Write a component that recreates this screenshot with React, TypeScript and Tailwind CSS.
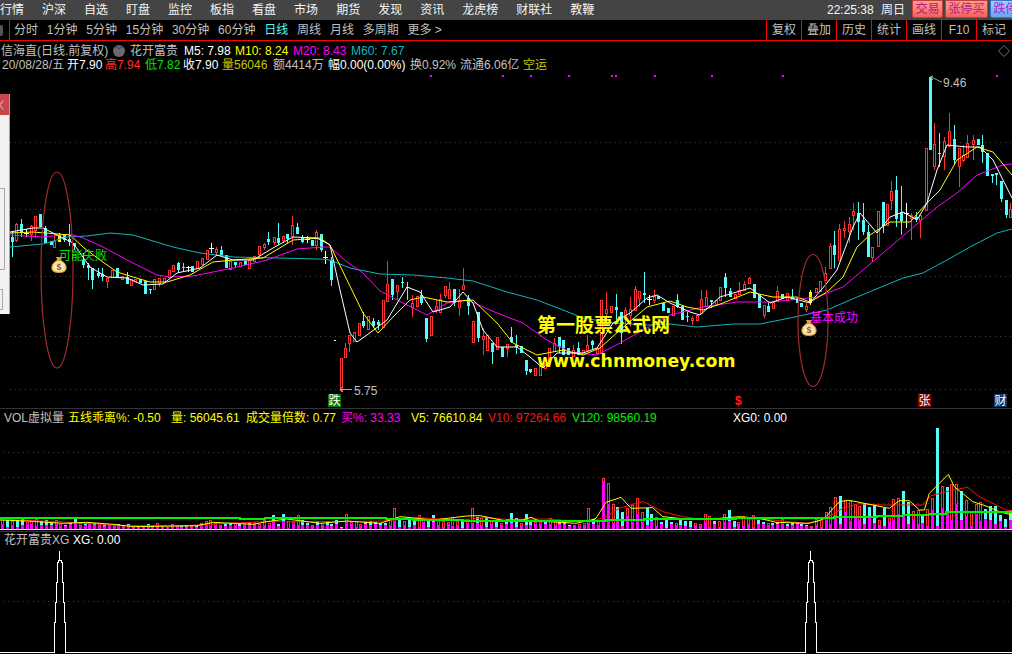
type Kind = "r" | "c" | "w" | "y";
type Row = [number, number, number, number, number, Kind];

const RED = "#ff3232";
const CYAN = "#54fcfc";

// candles read off the chart: x, body top, body bottom, high, low (0 = no wick), kind
const fromCrop = (ox: number, oy: number, rows: Row[]) =>
  rows.map(([x, t, b, h, l, k]) => ({
    x: Math.round(ox + x / 3),
    top: oy + t / 3,
    bottom: oy + b / 3,
    high: oy + (h || t) / 3,
    low: oy + (l || b) / 3,
    kind: k,
  }));

const candles = [
  ...fromCrop(0, 90, [
    [37, 440, 455, 425, 500, "c"], [49, 402, 452, 398, 455, "r"], [64, 402, 428, 388, 440, "c"], [78, 428, 430, 418, 440, "w"],
    [94, 410, 432, 405, 452, "r"], [106, 378, 420, 0, 445, "r"], [121, 372, 412, 0, 0, "c"], [136, 415, 458, 408, 0, "c"],
    [152, 452, 466, 0, 0, "c"], [163, 455, 472, 432, 0, "r"], [178, 436, 456, 428, 0, "y"], [193, 435, 450, 0, 455, "c"],
    [208, 448, 456, 402, 468, "c"], [222, 460, 468, 0, 480, "c"], [250, 510, 525, 490, 535, "c"], [265, 525, 535, 520, 570, "c"],
    [277, 535, 570, 0, 597, "c"], [293, 550, 558, 535, 565, "c"], [307, 552, 560, 535, 572, "c"], [322, 565, 573, 0, 594, "r"],
    [335, 540, 562, 0, 0, "r"], [350, 535, 560, 0, 0, "c"], [365, 558, 568, 0, 0, "r"], [380, 560, 582, 545, 0, "c"],
    [394, 568, 585, 0, 0, "r"], [406, 568, 575, 0, 0, "r"], [421, 568, 578, 0, 0, "c"], [436, 573, 612, 0, 0, "c"],
    [451, 596, 600, 0, 612, "c"], [463, 568, 598, 0, 0, "r"], [478, 565, 580, 0, 590, "r"], [492, 565, 578, 0, 0, "r"],
    [508, 540, 562, 0, 565, "r"], [520, 525, 545, 0, 0, "r"], [535, 520, 540, 517, 545, "c"], [550, 530, 534, 520, 545, "c"],
    [563, 532, 536, 528, 547, "w"], [577, 528, 546, 0, 0, "c"], [592, 515, 535, 0, 0, "r"], [607, 505, 522, 0, 0, "r"],
    [622, 482, 508, 0, 0, "r"], [634, 474, 476, 460, 490, "w"], [649, 478, 488, 470, 495, "r"], [664, 480, 495, 468, 0, "c"],
    [679, 495, 535, 0, 0, "c"], [691, 515, 538, 0, 0, "r"], [706, 515, 525, 0, 535, "c"], [721, 517, 530, 0, 0, "r"],
    [736, 512, 525, 0, 0, "c"], [748, 510, 535, 0, 0, "r"], [763, 500, 515, 0, 0, "r"], [778, 468, 492, 0, 503, "r"],
    [793, 463, 473, 458, 480, "r"], [805, 447, 457, 425, 465, "c"], [821, 442, 458, 0, 465, "r"], [835, 445, 460, 400, 465, "c"],
    [850, 438, 450, 0, 458, "r"], [862, 432, 448, 0, 460, "c"], [877, 405, 440, 378, 465, "r"], [892, 410, 432, 400, 0, "c"],
    [907, 445, 455, 435, 460, "c"], [920, 447, 449, 438, 458, "w"], [935, 450, 468, 0, 0, "c"], [949, 428, 465, 420, 480, "r"],
    [964, 433, 480, 0, 485, "c"], [976, 500, 502, 484, 522, "w"], [992, 510, 570, 500, 588, "c"],
  ]),
  ...fromCrop(330, 220, [
    [32, 415, 510, 413, 515, "r"], [44, 385, 413, 370, 0, "r"], [58, 345, 370, 0, 395, "r"], [73, 338, 365, 0, 0, "r"],
    [88, 310, 345, 0, 0, "r"], [100, 303, 318, 275, 325, "c"], [115, 290, 328, 0, 0, "r"], [130, 302, 318, 295, 325, "c"],
    [145, 305, 315, 300, 330, "c"], [160, 242, 322, 0, 0, "r"], [172, 193, 243, 123, 0, "r"], [187, 178, 225, 0, 240, "c"],
    [202, 195, 215, 0, 240, "r"], [216, 185, 190, 172, 205, "c"], [230, 200, 203, 186, 240, "c"], [245, 250, 262, 225, 290, "r"],
    [260, 230, 258, 0, 0, "r"], [274, 225, 250, 210, 255, "c"], [288, 295, 358, 0, 365, "c"], [302, 288, 347, 0, 0, "r"],
    [317, 258, 272, 240, 280, "r"], [331, 238, 278, 222, 0, "r"], [344, 200, 225, 0, 235, "r"], [358, 208, 235, 185, 0, "r"],
    [373, 207, 250, 0, 258, "c"], [388, 240, 262, 208, 288, "r"], [400, 195, 208, 143, 210, "r"], [415, 235, 258, 225, 285, "c"],
    [430, 303, 367, 0, 0, "r"], [445, 275, 355, 0, 365, "c"], [458, 350, 358, 325, 405, "r"], [472, 345, 390, 0, 0, "r"],
    [487, 370, 395, 0, 432, "c"], [502, 352, 387, 0, 0, "r"], [515, 380, 410, 0, 0, "c"], [530, 373, 385, 0, 412, "r"],
    [544, 350, 365, 322, 370, "c"], [558, 375, 382, 345, 402, "c"], [572, 378, 400, 0, 0, "c"], [587, 420, 452, 0, 465, "c"],
    [601, 447, 455, 0, 460, "c"], [616, 445, 467, 0, 0, "r"], [630, 435, 467, 412, 0, "r"], [645, 430, 445, 0, 0, "r"],
    [658, 385, 420, 0, 0, "r"], [673, 370, 395, 355, 0, "r"], [687, 350, 380, 0, 400, "c"], [700, 360, 405, 0, 0, "c"],
    [714, 385, 405, 0, 0, "c"], [730, 390, 410, 375, 0, "r"], [743, 385, 405, 365, 0, "c"], [758, 390, 400, 0, 0, "r"],
    [772, 375, 392, 345, 0, "r"], [787, 363, 375, 360, 390, "c"], [800, 385, 400, 0, 0, "r"], [814, 240, 400, 0, 0, "r"],
    [829, 268, 280, 215, 315, "r"], [844, 260, 278, 0, 0, "r"], [857, 262, 270, 222, 300, "c"], [872, 275, 340, 0, 372, "c"],
    [886, 270, 298, 260, 325, "r"], [900, 268, 285, 230, 320, "r"], [914, 207, 270, 198, 0, "r"], [928, 215, 235, 0, 262, "r"],
    [943, 220, 225, 156, 250, "c"], [958, 238, 240, 225, 255, "w"], [973, 228, 240, 210, 250, "r"], [985, 228, 238, 0, 0, "c"],
    [1000, 248, 272, 0, 0, "c"], [1015, 265, 280, 0, 0, "c"],
  ]),
  ...fromCrop(670, 70, [
    [10, 708, 735, 0, 0, "r"], [22, 690, 710, 672, 715, "c"], [37, 708, 750, 0, 0, "c"], [52, 738, 742, 725, 755, "c"],
    [67, 745, 750, 738, 765, "r"], [80, 735, 750, 0, 0, "r"], [94, 687, 730, 660, 0, "r"], [108, 682, 708, 660, 0, "r"],
    [124, 690, 695, 0, 715, "c"], [137, 690, 705, 0, 0, "r"], [151, 652, 690, 0, 0, "r"], [166, 620, 655, 610, 680, "c"],
    [181, 662, 682, 655, 0, "c"], [194, 672, 685, 0, 0, "r"], [208, 660, 672, 635, 0, "r"], [223, 642, 660, 632, 0, "r"],
    [238, 625, 640, 620, 0, "r"], [251, 642, 685, 0, 0, "c"], [266, 675, 715, 0, 0, "c"], [281, 705, 735, 0, 745, "r"],
    [295, 708, 725, 700, 0, "c"], [308, 697, 715, 0, 0, "r"], [322, 665, 695, 648, 0, "r"], [337, 672, 688, 0, 0, "c"],
    [351, 670, 690, 0, 0, "r"], [365, 680, 690, 658, 0, "c"], [380, 685, 700, 0, 0, "c"], [394, 700, 710, 0, 0, "c"],
    [409, 710, 718, 700, 725, "r"], [421, 667, 700, 660, 705, "y"], [437, 655, 668, 0, 0, "r"], [451, 633, 665, 0, 0, "r"],
    [466, 610, 632, 590, 0, "r"], [479, 528, 596, 520, 598, "r"], [493, 525, 555, 482, 595, "c"], [508, 478, 570, 462, 0, "r"],
    [523, 475, 482, 452, 505, "r"], [536, 463, 485, 440, 520, "r"], [550, 423, 437, 398, 480, "r"], [565, 430, 455, 396, 510, "c"],
    [580, 450, 485, 398, 495, "c"], [594, 485, 560, 465, 0, "c"], [607, 532, 562, 0, 575, "r"], [623, 424, 530, 0, 0, "r"],
    [638, 396, 468, 0, 490, "c"], [650, 403, 465, 0, 0, "r"], [664, 363, 392, 333, 420, "r"], [679, 360, 448, 318, 470, "c"],
    [694, 425, 452, 348, 495, "c"], [709, 430, 432, 400, 475, "w"], [722, 435, 445, 430, 510, "r"], [737, 442, 448, 425, 455, "c"],
    [751, 435, 450, 0, 505, "r"], [767, 235, 420, 0, 0, "r"], [779, 20, 240, 0, 0, "c"], [793, 222, 290, 160, 300, "r"],
    [808, 248, 252, 190, 290, "c"], [823, 213, 258, 200, 300, "r"], [836, 183, 230, 128, 0, "r"], [851, 207, 270, 165, 285, "c"],
    [866, 235, 290, 0, 350, "r"], [880, 255, 270, 225, 275, "r"], [892, 220, 262, 195, 0, "r"], [908, 212, 222, 195, 270, "r"],
    [923, 208, 224, 0, 0, "c"], [937, 224, 245, 195, 280, "c"], [950, 250, 317, 0, 0, "c"], [965, 312, 318, 0, 340, "c"],
    [979, 310, 316, 0, 345, "c"], [994, 333, 388, 0, 395, "c"], [1007, 390, 435, 0, 445, "c"], [1021, 417, 442, 400, 0, "r"],
  ]),
];

const ma60 = "10,247 43,244 67,237 87,236 110,233 133,235 153,241 173,247 200,253 233,257 277,258 320,259 330,260 350,268 380,274 413,275 447,278 473,281 507,292 537,300 563,310 583,318 613,323 647,325 670,324 697,327 733,324 760,324 790,318 827,310 857,297 903,278 923,273 947,260 970,247 997,233 1012,229";
const ma20 = "10,235 43,237 70,234 83,238 103,247 127,260 157,275 170,277 193,276 213,272 233,268 267,260 297,249 323,247 330,247 347,262 363,273 380,291 403,303 427,315 447,303 467,300 497,313 523,323 547,340 570,352 597,355 620,343 647,328 670,315 703,307 737,302 770,302 817,297 843,287 863,270 883,253 910,230 937,207 957,193 977,175 1003,165 1012,164";
const ma10 = "10,233 33,232 70,235 83,247 100,260 117,272 133,277 150,282 167,282 190,275 213,262 233,260 263,258 293,240 320,238 330,245 347,280 363,313 378,333 393,317 410,300 423,297 447,302 473,300 497,323 513,343 537,355 563,350 583,355 600,348 620,330 647,307 670,301 687,307 703,310 723,303 750,292 773,297 797,297 810,302 827,292 843,277 857,247 870,235 890,222 910,222 927,203 940,190 957,160 977,147 993,152 1012,175";
const ma5 = "10,232 33,228 43,228 57,235 73,243 90,267 107,277 127,278 143,285 163,284 177,273 200,268 217,255 233,260 253,260 273,248 293,237 317,238 330,245 340,290 350,333 357,342 367,335 387,320 407,287 420,292 433,312 450,307 463,292 473,303 483,330 497,347 517,347 530,357 543,368 557,353 583,353 597,348 613,323 630,313 647,298 657,295 670,303 690,312 700,315 720,297 750,288 770,303 787,297 810,303 827,283 837,270 853,227 860,213 877,233 890,217 903,212 917,220 927,203 937,170 947,145 967,147 980,147 993,160 1012,198";

// volume bars: + red hollow, - cyan filled, heights in px above the base line
const volLeft = [12, -9, 8, -9, -10, 7, 8, 10, -8, -9, -6, 9, 5, -4, -7, -10, 6, -6, 7, -6, 6, -4, 4, 5, -5, 3, -5, 3, 3, -3, -5, -3, 6, 3, 2, 5, -4, -3, -3, 3, -3, 6, 8, 9, 6, 4, -5, -6, 6, -5, 6, -7, 7, 5, 9, 6, -14, -5, -15, 8, 7, 14, -9, -6, 4, -8, 6, -8, -5, -9, -2, 15, 7, 8, 5, -7, -8, -7, -6, -6, 9, 21, -9, 8, -9, -9, 14, 11, -8, -14, 10, 8, 7, 12, 8, -8, 10, 21, -12, 11, -12, 9, -9, 6, -7];
const volRight = [-16, -11, 6, -15, -8, 7, 7, -7, 11, 8, -7, -7, -4, 4, 5, 6, 21, -10, 9, 51, 46, 25, -22, -17, 21, 24, 31, 17, -21, -15, 12, -7, -10, -7, 6, -9, -8, -8, 6, 5, 15, 13, -8, 8, 15, -19, -8, 7, 13, 12, 14, -9, -7, 6, -6, -7, 10, -5, -6, -7, -5, -4, 3, 10, 10, 17, 22, 32, -33, 29, 28, 25, 23, -26, -22, -24, 9, -21, 11, 30, 31, -38, -27, 18, 19, -13, 20, 31, -101, 43, -42, 45, 45, -38, 29, 17, 25, 27, -20, -23, -23, -14, -10, -19, -15, 12];
const innerShare = [0.4, 0.2, 0.55, 0.25, 0.45, 0.15, 0.6, 0.3, 0.5];

const bars = [
  ...volLeft.map((v, i) => ({ v, x: Math.round(2.3 + i * 4.84), i })),
  ...volRight.map((v, i) => ({ v, x: Math.round(511 + i * 4.84), i })),
];

const crop = (ox: number, oy: number, pts: number[][]) => pts.map(([x, y]) => `${ox + x / 3},${oy + y / 3}`).join(" ");

const v5Line =
  crop(0, 405, [[0, 345], [80, 348], [190, 355], [260, 352], [340, 358], [400, 365], [590, 362], [640, 352], [760, 358], [800, 350], [860, 342], [960, 355], [1040, 348], [1140, 355], [1200, 335], [1300, 345], [1400, 333], [1440, 332], [1518, 348]]) +
  " " +
  crop(506, 405, [[0, 345], [50, 345], [75, 337], [100, 348], [210, 355], [255, 345], [270, 340], [300, 292], [345, 277], [375, 310], [440, 308], [470, 335], [540, 342], [640, 340], [700, 335], [760, 340], [810, 352], [910, 355], [945, 345], [960, 335], [1000, 290], [1030, 286], [1100, 300], [1150, 310], [1180, 287], [1210, 287], [1240, 315], [1255, 315], [1270, 265], [1327, 208], [1345, 245], [1400, 290], [1440, 303], [1480, 320], [1518, 330]]);

const v10Line =
  crop(0, 405, [[0, 342], [170, 350], [260, 355], [360, 362], [560, 362], [680, 355], [800, 350], [1000, 350], [1150, 348], [1250, 338], [1380, 345], [1450, 338], [1518, 343]]) +
  " " +
  crop(506, 405, [[0, 343], [130, 342], [210, 350], [260, 348], [300, 335], [340, 310], [380, 298], [413, 290], [470, 320], [530, 335], [600, 345], [680, 340], [780, 343], [900, 355], [950, 345], [1010, 310], [1060, 296], [1130, 300], [1170, 300], [1250, 300], [1275, 272], [1340, 255], [1385, 247], [1420, 275], [1500, 315], [1518, 318]]);

const v120Line = "0,518 240,518 240,519 265,519 265,518 386,518 386,519 413,519 413,520 463,520 463,521 606,521 606,520 644,520 644,519 736,519 736,518 834,518 834,517 877,517 877,516 903,516 903,515 929,515 929,514 946,514 946,512 1012,512";

const magentaDots = [430, 502, 530, 568, 611, 615, 654, 711, 782, 996];
const navItems = ["行情", "沪深", "自选", "盯盘", "监控", "板指", "看盘", "市场", "期货", "发现", "资讯", "龙虎榜", "财联社", "教鞭"];
const periods = ["分时", "1分钟", "5分钟", "15分钟", "30分钟", "60分钟", "日线", "周线", "月线", "多周期"];
const tools = ["复权", "叠加", "历史", "统计", "画线", "F10", "标记"];

function Spike({ c }: { c: number }) {
  const left = `M${c - 5.5},652.5 V622.5 H${c - 4.5} V602.5 H${c - 3.5} V582.5 H${c - 2.5} V562.5 H${c - 1.5} V560 H${c} V551`;
  const right = `M${c + 5.5},652.5 V622.5 H${c + 4.5} V602.5 H${c + 3.5} V582.5 H${c + 2.5} V562.5 H${c + 1.5} V560 H${c}`;
  return (
    <g fill="none" stroke="#fff" strokeWidth="1">
      <path d={left} />
      <path d={right} />
    </g>
  );
}

function MoneyBag({ className }: { className: string }) {
  return (
    <svg className={className} width="16" height="17" viewBox="0 0 16 17">
      <path d="M5 1 L11 1 L9.6 4.5 L6.4 4.5 Z" fill="#d8a040" />
      <path d="M6 4.5 C1.5 7 0.5 10 1 13 C1.6 15.8 4.5 16.5 8 16.5 C11.5 16.5 14.4 15.8 15 13 C15.5 10 14.5 7 10 4.5 Z" fill="#f7dc96" stroke="#d89a38" strokeWidth="1" />
      <ellipse cx="8" cy="11" rx="4.6" ry="3.6" fill="#fff4cf" />
      <text x="8" y="14" textAnchor="middle" fontSize="9" fontWeight="700" fill="#8a5a20" fontFamily="Liberation Sans, sans-serif">$</text>
    </svg>
  );
}

export default function App() {
  return (
    <div className="flex flex-col w-[1012px] h-[654px] overflow-hidden bg-black text-[12px] leading-[14px] text-[#c0c0c0] font-['Liberation_Sans','Noto_Sans_CJK_SC',sans-serif]">
      {/* menu bar */}
      <div className="flex h-5 shrink-0 items-center justify-between bg-[#444444] text-[#f4f4f4]">
        <div className="flex gap-[18px]">
          {navItems.map((n) => (
            <span key={n}>{n}</span>
          ))}
        </div>
        <div className="flex h-full items-start">
          <span className="mt-[3px] w-[54px] text-[12px]">22:25:38</span>
          <span className="mt-[3px] w-[31px]">周日</span>
          <div className="flex w-[100px] gap-[2px] overflow-hidden">
            <span className="flex h-[18px] w-[31px] shrink-0 items-center justify-center rounded-b-[2px] border border-[#c04040] bg-gradient-to-b from-[#ff9c8c] to-[#f4605c] text-[#b01c8c]">交易</span>
            <span className="flex h-[18px] w-[43px] shrink-0 items-center justify-center rounded-b-[2px] border border-[#c04040] bg-gradient-to-b from-[#ff9c8c] to-[#f4605c] text-[#b01c8c]">张停买</span>
            <span className="flex h-[18px] w-[43px] shrink-0 items-center justify-center rounded-b-[2px] border border-[#3a78c8] bg-gradient-to-b from-[#a0d0ff] to-[#60a8f8] text-[#b020d0]">跌停卖</span>
          </div>
        </div>
      </div>

      {/* period toolbar */}
      <div className="flex h-[21px] shrink-0 items-stretch justify-between border-b border-[#ff0000]">
        <div className="flex items-center">
          <span className="h-[11px] w-[3px] rounded-r-[2px] bg-[#555555]" />
          <span className="ml-[6px] h-full w-px bg-[#ff0000]" />
          <div className="ml-1 flex gap-[8.8px]">
            {periods.map((p) => (
              <span key={p} className={p === "日线" ? "text-[#54fcfc]" : ""}>{p}</span>
            ))}
            <span>更多 &gt;</span>
          </div>
        </div>
        <div className="flex">
          {tools.map((t) => (
            <span key={t} className="flex w-[35px] items-center justify-center border-l border-[#ff0000]">{t}</span>
          ))}
          <span className="w-px" />
        </div>
      </div>

      {/* price panel */}
      <div className="relative h-[368px] shrink-0 border-b border-[#333333]">
        <svg className="absolute inset-0 h-full w-full" viewBox="0 41 1012 367">
          <g stroke="#4a4040" strokeWidth="1" strokeDasharray="1 4">
            {[142.5, 209.5, 276.5, 336.5, 389.5].map((y) => (
              <line key={y} x1="10" x2="1012" y1={y} y2={y} />
            ))}
          </g>
          <g shapeRendering="crispEdges">
            {magentaDots.map((x) => (
              <rect key={x} x={x} y="75" width="2" height="2" fill="#ff00ff" />
            ))}
            {candles.map((c, i) => {
              const color = c.kind === "r" ? RED : c.kind === "c" ? CYAN : c.kind === "y" ? "#ffff00" : "#ffffff";
              return (
                <g key={i}>
                  <rect x={c.x} y={c.high} width="1" height={c.low - c.high} fill={color} />
                  {c.kind === "r" ? (
                    <rect x={c.x - 0.5} y={c.top} width="2" height={c.bottom - c.top} fill="#000" stroke={color} />
                  ) : c.kind === "w" ? (
                    <rect x={c.x - 2} y={c.top} width="5" height="1" fill={color} />
                  ) : (
                    <rect x={c.x - 1} y={c.top} width="3" height={c.bottom - c.top} fill={color} />
                  )}
                </g>
              );
            })}
            <rect x="334" y="340" width="2" height="1" fill="#fff" />
          </g>
          <g fill="none" strokeWidth="1">
            <polyline points={ma60} stroke="#12b4bc" />
            <polyline points={ma20} stroke="#ff00ff" />
            <polyline points={ma10} stroke="#ffff00" />
            <polyline points={ma5} stroke="#ffffff" />
          </g>
          <g fill="none" stroke="#a02c2c" strokeWidth="1.2">
            <ellipse cx="57" cy="270" rx="16" ry="98" />
            <ellipse cx="813" cy="320.5" rx="15" ry="66" />
          </g>
          <g fill="none" stroke="#a8a8a8" strokeWidth="1">
            <path d="M343,386 L340,389.5 L343,392 M340,389.5 H352" />
            <path d="M933,76 L930,77 L933,80 M930,77 C935,78 938,81 942,82" />
            <path d="M1004,45.5 L1009.5,51 L1004,56.5 L998.5,51 Z" stroke="#707070" />
          </g>
        </svg>

        <div className="relative flex h-[17px] items-end pl-px">
          <span className="w-[112px]">信海直(日线.前复权)</span>
          <span className="mb-px flex h-[12px] w-[12px] items-center justify-center rounded-full bg-[#6a6a6a] text-[8px] leading-none text-[#222]">﹀</span>
          <span className="ml-[5px] w-[54px]">花开富贵</span>
          <span className="w-[51px] text-white">M5: 7.98</span>
          <span className="w-[58px] text-[#ffff00]">M10: 8.24</span>
          <span className="w-[58px] text-[#ff00ff]">M20: 8.43</span>
          <span className="text-[#12b4bc]">M60: 7.67</span>
        </div>
        <div className="relative flex h-[13px] items-center pl-[2px] whitespace-nowrap">
          <span className="w-[65px]">20/08/28/五</span>
          <span className="w-[38px] text-white">开7.90</span>
          <span className="w-[40px] text-[#ff3232]">高7.94</span>
          <span className="w-[38px] text-[#00e000]">低7.82</span>
          <span className="w-[39px] text-white">收7.90</span>
          <span className="w-[51px] text-[#c8c800]">量56046</span>
          <span className="w-[55px]">额4414万</span>
          <span className="w-[82px] text-white">幅0.00(0.00%)</span>
          <span className="w-[50px]">换0.92%</span>
          <span className="w-[63px]">流通6.06亿</span>
          <span className="text-[#c8c800]">空运</span>
        </div>

        {/* partly hidden dialog at the left edge */}
        <div className="absolute left-0 top-[53px] h-[220px] w-[10px] overflow-hidden border-r border-[#a0a0a0] bg-[#f3f2f0]">
          <div className="flex h-[21px] items-center bg-[#c8474c]">
            <svg width="5" height="10" viewBox="0 0 5 10" className="-ml-px">
              <path d="M4.5 0.5 L0.5 5 L4.5 9.5" fill="none" stroke="#f0c8c8" strokeWidth="1" />
            </svg>
          </div>
          <div className="mt-[73px] h-[82px] w-[5px] border-y border-r border-[#a8a8a8]" />
          <div className="mt-[19px] h-[21px] w-[3px] border-y border-r border-[#a8a8a8]" />
        </div>

        <MoneyBag className="absolute left-[51px] top-[215px]" />
        <MoneyBag className="absolute left-[801px] top-[278px]" />
        <span className="absolute left-[59px] top-[208px] text-[#00e800]">可能失败</span>
        <span className="absolute left-[810px] top-[270px] text-[#ff00ff]">基本成功</span>
        <span className="absolute left-[354px] top-[343px]">5.75</span>
        <span className="absolute left-[943px] top-[35px]">9.46</span>

        <span className="absolute left-[537px] top-[274px] text-[19px] leading-[22px] font-bold text-[#ffff00]">第一股票公式网</span>
        <span className="absolute left-[537px] top-[309px] font-['DejaVu_Sans',sans-serif] text-[17.3px] leading-[22px] font-bold text-[#ffff00]">www.chnmoney.com</span>

        <span className="absolute left-[328px] top-[353px] flex h-[13px] w-[13px] items-center justify-center bg-[#007a00] text-white">跌</span>
        <span className="absolute left-[735px] top-[353px] font-bold text-[#ff2020]">$</span>
        <span className="absolute left-[918px] top-[353px] flex h-[13px] w-[13px] items-center justify-center bg-[#7a0808] text-white">张</span>
        <span className="absolute left-[994px] top-[353px] flex h-[13px] w-[13px] items-center justify-center bg-[#0c3a6c] text-white">财</span>
      </div>

      {/* volume panel */}
      <div className="relative h-[123px] shrink-0 border-b border-[#333333]">
        <svg className="absolute inset-0 h-full w-full" viewBox="0 409 1012 122">
          <g stroke="#4a4040" strokeWidth="1" strokeDasharray="1 4">
            {[452.5, 477.5, 503.5].map((y) => (
              <line key={y} x1="3" x2="1012" y1={y} y2={y} />
            ))}
          </g>
          <g shapeRendering="crispEdges">
            {bars.map((b, k) => {
              const h = Math.abs(b.v);
              const share = b.v >= 50 ? 0.95 : b.v === -101 ? 0.03 : h <= 7 ? 0.7 : innerShare[b.i % innerShare.length];
              return (
                <g key={k}>
                  {b.v > 0 ? (
                    <rect x={b.x - 0.5} y={529 - h + 0.5} width="2" height={h} fill="#000" stroke={RED} />
                  ) : (
                    <rect x={b.x - 1} y={529 - h} width="3" height={h} fill={CYAN} />
                  )}
                  <rect x={b.x - 1} y={529 - h * share} width="3" height={h * share} fill="#ff00ff" />
                </g>
              );
            })}
            <rect x="0" y="529" width="1012" height="1" fill="#ffffff" />
          </g>
          <g fill="none">
            <polyline points={v10Line} stroke="#ff1010" strokeWidth="1" />
            <polyline points={v5Line} stroke="#ffff00" strokeWidth="1" />
            <polyline points={v120Line} stroke="#00f000" strokeWidth="2" shapeRendering="crispEdges" />
          </g>
        </svg>
        <div className="relative flex h-[16px] items-end whitespace-nowrap pl-1">
          <span className="w-[64px]">VOL虚拟量</span>
          <span className="w-[103px] text-[#ffff00]">五线乖离%: -0.50</span>
          <span className="w-[75px] text-[#ffff00]">量: 56045.61</span>
          <span className="w-[95px] text-[#ffff00]">成交量倍数: 0.77</span>
          <span className="w-[70px] text-[#ff00ff]">买%: 33.33</span>
          <span className="w-[77px] text-[#ffff00]">V5: 76610.84</span>
          <span className="w-[84px] text-[#ff1010]">V10: 97264.66</span>
          <span className="w-[161px] text-[#00f000]">V120: 98560.19</span>
          <span className="text-white">XG0: 0.00</span>
        </div>
      </div>

      {/* signal panel */}
      <div className="relative flex-1">
        <svg className="absolute inset-0 h-full w-full" viewBox="0 532 1012 122">
          <line x1="3" x2="1012" y1="601.5" y2="601.5" stroke="#4a4040" strokeWidth="1" strokeDasharray="1 4" />
          <g shapeRendering="crispEdges">
            <Spike c={59.5} />
            <Spike c={810.5} />
            <path d="M0,652.5 H54 M65,652.5 H805 M816,652.5 H1012" stroke="#fff" strokeWidth="1" fill="none" />
          </g>
        </svg>
        <div className="relative flex h-[15px] items-end pl-1">
          <span className="w-[69px]">花开富贵XG</span>
          <span className="text-white">XG: 0.00</span>
        </div>
      </div>
    </div>
  );
}
